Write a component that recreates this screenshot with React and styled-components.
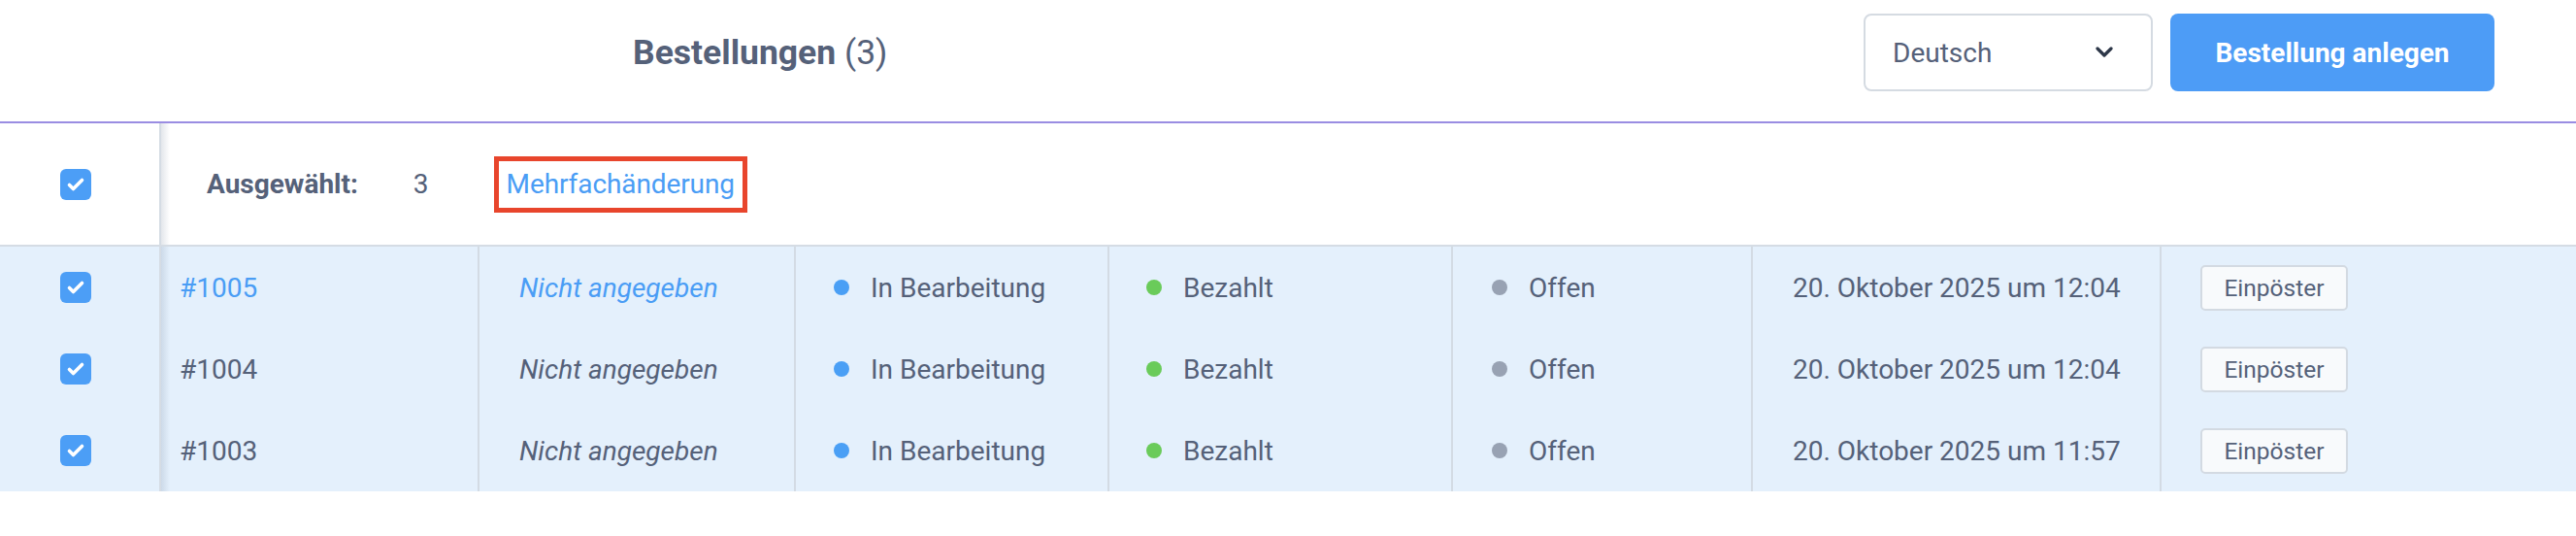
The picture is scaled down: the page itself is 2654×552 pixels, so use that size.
import React from "react";
import styled, { createGlobalStyle } from "styled-components";

const GlobalStyle = createGlobalStyle`
  html, body { margin: 0; padding: 0; background: #ffffff; }
  body {
    font-family: Roboto, "Liberation Sans", Arial, sans-serif;
    color: #556179;
  }
  * { box-sizing: border-box; }
`;

const shadowEdge = `linear-gradient(to right, rgba(80, 100, 130, 0.16), rgba(80, 100, 130, 0) 9px)`;

const Page = styled.div`
  width: 100%;
  background: #ffffff;
`;

const Header = styled.header`
  display: flex;
  align-items: center;
  height: 127px;
  padding: 14px 84px 31px 652px;
  border-bottom: 2px solid #9a8de2;
`;

const Title = styled.h1`
  flex: 1;
  margin: 0;
  font-size: 35.5px;
  line-height: 42px;
  font-weight: 700;
  color: #556179;
  span { font-weight: 400; }
`;

const LangSelect = styled.div`
  width: 298px;
  height: 80px;
  display: flex;
  align-items: center;
  justify-content: space-between;
  padding: 0 39px 0 28px;
  border: 2px solid #d5dbe2;
  border-radius: 8px;
  background: #fff;
  font-size: 28px;
  color: #556179;
`;

const PrimaryButton = styled.button`
  margin-left: 18px;
  width: 334px;
  height: 80px;
  border: none;
  border-radius: 8px;
  background: #4d9cf6;
  color: #ffffff;
  font-family: Roboto, "Liberation Sans", Arial, sans-serif;
  font-size: 28px;
  font-weight: 700;
`;

const SelectionBar = styled.div`
  display: flex;
  height: 127px;
  border-bottom: 2px solid #d5dce4;
  background: #ffffff;
`;

const StickyCell = styled.div`
  width: 166px;
  flex: none;
  display: flex;
  align-items: center;
  padding-left: 62px;
  border-right: 2px solid #d5dce4;
`;

const SelectionContent = styled.div`
  flex: 1;
  display: flex;
  align-items: center;
  padding-left: 47px;
  font-size: 28px;
  background: ${shadowEdge};
`;

const SelLabel = styled.span`
  font-weight: 700;
  margin-right: 57px;
`;

const SelCount = styled.span`
  margin-right: 67px;
`;

const Highlight = styled.span`
  border: 5px solid #e8452c;
  padding: 7px 8px;
  line-height: 34px;
  color: #4a9df5;
  letter-spacing: -0.1px;
`;

const Body = styled.div`
  background: #e4f0fc;
`;

const Row = styled.div`
  display: grid;
  grid-template-columns: 166px 326px 326px 323px 354px 309px 421px 1fr;
  height: 84px;
  font-size: 28px;
`;

const StickyRowCell = styled(StickyCell)`
  width: auto;
`;

const Cell = styled.div`
  display: flex;
  align-items: center;
  padding-left: ${(p) => (p.$pad != null ? p.$pad : 41)}px;
  border-left: ${(p) => (p.$noLine ? "none" : "2px solid #d3dbe4")};
  background: ${(p) => (p.$edge ? shadowEdge : "none")};
  color: ${(p) => (p.$active ? "#4a9df5" : "#556179")};
  font-style: ${(p) => (p.$italic ? "italic" : "normal")};
  white-space: nowrap;
`;

const Dot = styled.span`
  width: 16px;
  height: 16px;
  border-radius: 50%;
  background: ${(p) => p.$color};
  margin-right: 22px;
  flex: none;
`;

const SmallButton = styled.button`
  width: 152px;
  height: 47px;
  border: 2px solid #d3dae2;
  border-radius: 5px;
  background: #f8fafc;
  color: #556179;
  font-family: Roboto, "Liberation Sans", Arial, sans-serif;
  font-size: 24.5px;
  padding: 0;
`;

const CheckBox = styled.span`
  width: 32px;
  height: 32px;
  border-radius: 6px;
  background: #4c9ef6;
  display: inline-flex;
  align-items: center;
  justify-content: center;
`;

const Check = () => (
  <CheckBox>
    <svg width="32" height="32" viewBox="0 0 32 32">
      <polyline
        points="9.5,16.5 13.5,20.5 22.5,11.5"
        fill="none"
        stroke="#ffffff"
        strokeWidth="3.6"
        strokeLinecap="round"
        strokeLinejoin="round"
      />
    </svg>
  </CheckBox>
);

const Chevron = () => (
  <svg width="18" height="12" viewBox="0 0 18 12">
    <polyline
      points="2,2 9,9 16,2"
      fill="none"
      stroke="#2d3748"
      strokeWidth="3.2"
      strokeLinecap="round"
      strokeLinejoin="round"
    />
  </svg>
);

const orders = [
  { id: "#1005", date: "20. Oktober 2025 um 12:04", active: true },
  { id: "#1004", date: "20. Oktober 2025 um 12:04" },
  { id: "#1003", date: "20. Oktober 2025 um 11:57" },
];

export default function App() {
  return (
    <Page>
      <GlobalStyle />
      <Header>
        <Title>
          Bestellungen <span>(3)</span>
        </Title>
        <LangSelect>
          <span>Deutsch</span>
          <Chevron />
        </LangSelect>
        <PrimaryButton>Bestellung anlegen</PrimaryButton>
      </Header>

      <SelectionBar>
        <StickyCell>
          <Check />
        </StickyCell>
        <SelectionContent>
          <SelLabel>Ausgewählt:</SelLabel>
          <SelCount>3</SelCount>
          <Highlight>Mehrfachänderung</Highlight>
        </SelectionContent>
      </SelectionBar>

      <Body>
        {orders.map((o) => (
          <Row key={o.id}>
            <StickyRowCell>
              <Check />
            </StickyRowCell>
            <Cell $noLine $edge $pad={19} $active={o.active}>
              {o.id}
            </Cell>
            <Cell $italic $active={o.active}>
              Nicht angegeben
            </Cell>
            <Cell $pad={39}>
              <Dot $color="#4a9ff5" />
              In Bearbeitung
            </Cell>
            <Cell $pad={38}>
              <Dot $color="#6acb5a" />
              Bezahlt
            </Cell>
            <Cell $pad={40}>
              <Dot $color="#98a2b3" />
              Offen
            </Cell>
            <Cell>{o.date}</Cell>
            <Cell $pad={40}>
              <SmallButton>Einpöster</SmallButton>
            </Cell>
          </Row>
        ))}
      </Body>
    </Page>
  );
}
